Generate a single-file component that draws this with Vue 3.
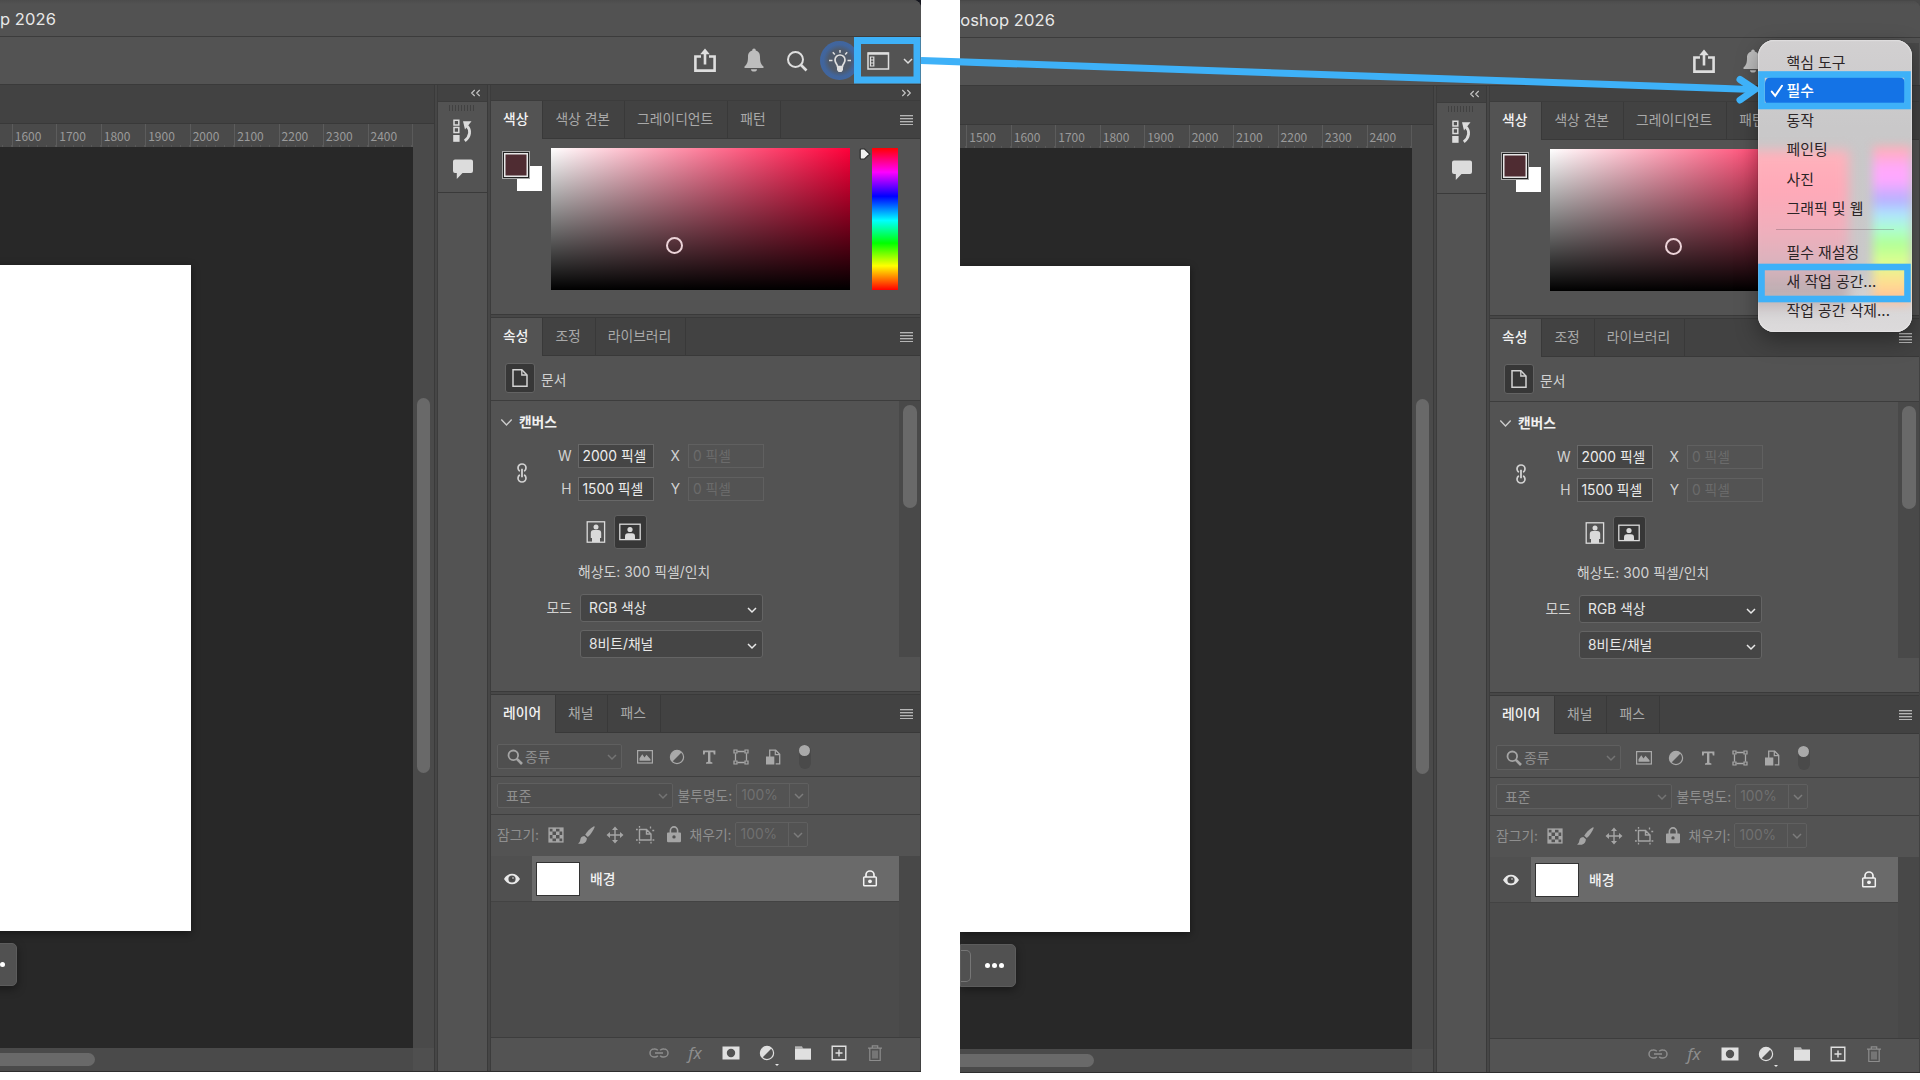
<template>
  <div class="board">
    <!-- icon sprite, one unit = one pixel at 24x24 -->
    <svg class="sprite" aria-hidden="true">
      <symbol id="share" viewBox="0 0 24 24">
        <path d="M8 8.5H2.4V22.6H21.6V8.5H16" fill="none" stroke="currentColor" stroke-width="2.6" />
        <path d="M12 16.5V4" fill="none" stroke="currentColor" stroke-width="2.6" />
        <path d="M7.2 6.2L12 0.6L16.8 6.2Z" fill="currentColor" />
      </symbol>
      <symbol id="bell" viewBox="0 0 24 24">
        <path d="M12 0.6a1.8 1.8 0 0 1 1.8 1.9C17 3.4 18 6 18 9c0 5.5 1.2 7.6 3.500 9.400V20H2.500V18.400C4.800 16.600 6 14.500 6 9c0-3 1-5.600 4.200-6.500A1.800 1.800 0 0 1 12 .6z" fill="currentColor" />
        <path d="M9 21.200h6a3 2.300 0 0 1-6 0z" fill="currentColor" />
      </symbol>
      <symbol id="search" viewBox="0 0 24 24">
        <circle cx="10.500" cy="10.500" r="7.500" fill="none" stroke="currentColor" stroke-width="2" />
        <path d="M16 16L21.500 21.500" stroke="currentColor" stroke-width="2.600" />
      </symbol>
      <symbol id="bulb" viewBox="0 0 24 24">
        <path d="M9.500 17.500C9.500 15 7 14.200 7 11a5 5 0 0 1 10 0c0 3.200-2.500 4-2.500 6.500z" fill="none" stroke="currentColor" stroke-width="1.700" />
        <path d="M9 17.500h6v3.500l-1.500 2h-3L9 21z" fill="currentColor" />
        <path d="M12 1v2.800M4.800 3.200l2 2.200M19.200 3.200l-2 2.200M1 11.500h3.500M19.500 11.500H23" stroke="currentColor" stroke-width="1.500" />
      </symbol>
      <symbol id="workspace" viewBox="0 0 24 24">
        <rect x="2" y="4" width="20.500" height="16" fill="none" stroke="currentColor" stroke-width="1.500" />
        <path d="M2 4.600H22.500" stroke="currentColor" stroke-width="2.400" />
        <path d="M4.500 8h3.300v9H4.500zM4.500 11h3.300M4.500 14h3.300" fill="none" stroke="currentColor" stroke-width="1.200" />
      </symbol>
      <symbol id="chevron" viewBox="0 0 12 12">
        <path d="M2 4l4 4 4-4" fill="none" stroke="currentColor" stroke-width="1.500" />
      </symbol>
      <symbol id="history" viewBox="0 0 24 24">
        <path d="M3 1.200h4.800v4.800H3zM3 8.600h4.800v4.800H3z" fill="none" stroke="currentColor" stroke-width="1.500" />
        <rect x="2.200" y="16" width="6.400" height="6.800" fill="currentColor" />
        <path d="M13.800 21.800C19.500 17.500 20 11 16 7" fill="none" stroke="currentColor" stroke-width="2.800" />
        <path d="M12 2.300h8.500L14 10.500z" fill="currentColor" />
      </symbol>
      <symbol id="comment" viewBox="0 0 24 24">
        <path d="M4 2.500h16a2 2 0 0 1 2 2v9.500a2 2 0 0 1-2 2H11.500L5.800 22V16H4a2 2 0 0 1-2-2V4.500a2 2 0 0 1 2-2z" fill="currentColor" />
      </symbol>
      <symbol id="doc" viewBox="0 0 24 24">
        <path d="M5 3.800h8.800l5.200 5.200v11.200H5z" fill="none" stroke="currentColor" stroke-width="1.500" />
        <path d="M13.800 3.800v5.200H19" fill="none" stroke="currentColor" stroke-width="1.300" />
      </symbol>
      <symbol id="chain" viewBox="0 0 24 24">
        <path d="M9.800 10.300A4.200 4.200 0 0 1 8 7a4 4 0 0 1 8 0 4.200 4.200 0 0 1-1.800 3.300M9.800 13.700A4.200 4.200 0 0 0 8 17a4 4 0 0 0 8 0 4.200 4.200 0 0 0-1.800-3.300" fill="none" stroke="currentColor" stroke-width="1.700" />
        <path d="M12 7.800v8.400" stroke="currentColor" stroke-width="1.800" />
      </symbol>
      <symbol id="portrait" viewBox="0 0 24 24">
        <rect x="3.200" y="1.800" width="17.400" height="20.400" fill="none" stroke="currentColor" stroke-width="1.300" />
        <circle cx="12" cy="7" r="2.500" fill="currentColor" />
        <path d="M6.800 13q0-3 3-3h4.400q3 0 3 3v5h-1.200v4H8v-4H6.800z" fill="currentColor" />
      </symbol>
      <symbol id="landscape" viewBox="0 0 24 24">
        <rect x="1.800" y="4.200" width="20.400" height="15.400" fill="none" stroke="currentColor" stroke-width="1.300" />
        <circle cx="12" cy="9.500" r="2.600" fill="currentColor" />
        <path d="M7 19.500v-3q0-3.200 3-3.200h4q3 0 3 3.200v3z" fill="currentColor" />
      </symbol>
      <symbol id="find" viewBox="0 0 24 24">
        <circle cx="10.300" cy="10.300" r="4.800" fill="none" stroke="currentColor" stroke-width="1.800" />
        <path d="M13.600 13.600l5.400 5.400" stroke="currentColor" stroke-width="2.700" />
      </symbol>
      <symbol id="image" viewBox="0 0 24 24">
        <rect x="4.600" y="5.600" width="14.800" height="12.400" fill="none" stroke="currentColor" stroke-width="1.200" />
        <path d="M6.500 15.800v-2.500l2.800-4 2.200 3.200 2-2.700 4 4.500v1.500z" fill="currentColor" />
      </symbol>
      <symbol id="adjust" viewBox="0 0 24 24">
        <circle cx="12" cy="12" r="6.600" fill="none" stroke="currentColor" stroke-width="1.200" />
        <path d="M16.700 7.300A6.650 6.650 0 0 0 7.300 16.700z" fill="currentColor" />
      </symbol>
      <symbol id="type" viewBox="0 0 24 24">
        <path d="M6 5.500h12.400v4h-1.600l-.5-2.200h-2.900v9.500l2 .6v1.300H9v-1.300l2-.6V7.300H8.100l-.5 2.200H6z" fill="currentColor" />
      </symbol>
      <symbol id="shape" viewBox="0 0 24 24">
        <path d="M8.500 6.500h7M8.500 17.500h7M6.500 8.500v7M17.500 8.500v7" stroke="currentColor" stroke-width="1.300" />
        <path d="M5 5h3v3H5zM16 5h3v3h-3zM5 16h3v3H5zM16 16h3v3h-3z" fill="none" stroke="currentColor" stroke-width="1.200" />
      </symbol>
      <symbol id="smart" viewBox="0 0 24 24">
        <path d="M8.700 12V5.200h6l4 4v9.600h-4" fill="none" stroke="currentColor" stroke-width="1.300" />
        <path d="M14.300 5.200v4.400h4.400" fill="none" stroke="currentColor" stroke-width="1.200" />
        <rect x="5" y="11.500" width="8.300" height="8" fill="currentColor" />
      </symbol>
      <symbol id="checker" viewBox="0 0 24 24">
        <rect x="5.100" y="5.100" width="13.800" height="13.800" fill="none" stroke="currentColor" stroke-width="1.400" />
        <path d="M8.500 5H12v3.500H8.500zM15.500 5H19v3.500h-3.500zM5 8.500h3.500V12H5zM12 8.500h3.500V12H12zM8.500 12H12v3.500H8.500zM15.500 12H19v3.500h-3.500zM5 15.500h3.500V19H5zM12 15.500h3.500V19H12z" fill="currentColor" />
      </symbol>
      <symbol id="brush" viewBox="0 0 24 24">
        <path d="M20 3.200c-4 2-7.200 5.500-8.800 8.600l2.600 2.200c3-2.600 5.600-6.500 7-10.300z" fill="currentColor" />
        <path d="M10.300 12.900c-3 .2-3.700 2-4 3.900-.2 1.800-.9 2.900-2.300 3.700 3.300.9 8.600.4 8.900-5.300z" fill="currentColor" />
      </symbol>
      <symbol id="move" viewBox="0 0 24 24">
        <path d="M12 5v14M5 12h14" stroke="currentColor" stroke-width="1.400" />
        <path d="M12 3.500l3 3.500H9zM12 20.500l3-3.500H9zM3.500 12L7 9v6zM20.500 12L17 9v6z" fill="currentColor" />
      </symbol>
      <symbol id="artboard" viewBox="0 0 24 24">
        <path d="M6.500 6.500v10.500h11.500V11l-4.500-4.500zM13.500 6.500v4.500H18" fill="none" stroke="currentColor" stroke-width="1.400" />
        <path d="M3 6.500h1.800M3 17h1.800M19.500 17h1.800M6.500 3v1.800M6.500 18.700v1.800M18 18.700v1.800M17.500 5.500V3.500M19.300 7.500h1.900" stroke="currentColor" stroke-width="1.300" />
      </symbol>
      <symbol id="lock" viewBox="0 0 24 24">
        <path d="M8.400 10V7.500a3.600 3.600 0 0 1 7.200 0V10" fill="none" stroke="currentColor" stroke-width="1.600" />
        <path fill-rule="evenodd" d="M6 9.500h12q1 0 1 1V18q0 1.200-1.200 1.200H6.200Q5 19.200 5 18v-7.500q0-1 1-1zM12 12.200a1.700 1.700 0 1 0 0 3.400 1.700 1.700 0 0 0 0-3.400z" fill="currentColor" />
      </symbol>
      <symbol id="lock-line" viewBox="0 0 24 24">
        <path d="M8 10V7.800a4 3.800 0 0 1 8 0V10" fill="none" stroke="currentColor" stroke-width="1.700" />
        <rect x="5.700" y="10" width="12.600" height="8.800" rx=".8" fill="none" stroke="currentColor" stroke-width="1.500" />
        <circle cx="12" cy="14.300" r="1.900" fill="currentColor" />
      </symbol>
      <symbol id="eye" viewBox="0 0 24 24">
        <path fill-rule="evenodd" d="M4 12c2-3.500 4.800-5.200 8-5.200s6 1.700 8 5.200c-2 3.500-4.800 5.200-8 5.200S6 15.500 4 12zm8-3.600a3.600 3.600 0 1 0 0 7.200 3.600 3.600 0 0 0 0-7.200z" fill="currentColor" />
        <circle cx="12" cy="12" r="1.700" fill="#444" />
        <circle cx="13" cy="11" r=".8" fill="currentColor" />
      </symbol>
      <symbol id="link" viewBox="0 0 24 24">
        <path d="M10.800 9.200A4 4 0 0 0 7 8a4 4 0 0 0 0 8 4 4 0 0 0 3.800-1.200M13.200 9.200A4 4 0 0 1 17 8a4 4 0 0 1 0 8 4 4 0 0 1-3.800-1.200" fill="none" stroke="currentColor" stroke-width="1.500" />
        <path d="M8 12h8" stroke="currentColor" stroke-width="1.600" />
      </symbol>
      <symbol id="mask" viewBox="0 0 24 24">
        <path fill-rule="evenodd" d="M3.500 5.500h17v13h-17zM12 7.800a4.200 4.200 0 1 0 0 8.400 4.200 4.200 0 0 0 0-8.400z" fill="currentColor" />
      </symbol>
      <symbol id="folder" viewBox="0 0 24 24">
        <path d="M4 5.500h7l1.200 2H20v11.200H4z" fill="currentColor" />
        <path d="M4 7h8" stroke="#535353" stroke-width=".6" />
      </symbol>
      <symbol id="plus" viewBox="0 0 24 24">
        <path d="M5.200 5.200h13.600v13.600H5.200z" fill="none" stroke="currentColor" stroke-width="1.400" />
        <path d="M12 8.500v7M8.500 12h7" stroke="currentColor" stroke-width="1.400" />
      </symbol>
      <symbol id="trash" viewBox="0 0 24 24">
        <path d="M5 7.200h14M9.300 7V4.800h5.400V7M6.800 7.500v12h10.400v-12M10 9.500v8M12 9.500v8M14 9.500v8" fill="none" stroke="currentColor" stroke-width="1.200" />
      </symbol>
    </svg>

    <div v-for="shot in shots" :key="shot.id" class="shot" :class="shot.id">
      <div class="window">
        <header class="titlebar"><span>Adobe Photoshop 2026</span></header>

        <div class="options">
          <svg class="ic share"><use href="#share" /></svg>
          <svg class="ic bell"><use href="#bell" /></svg>
          <svg class="ic find-all"><use href="#search" /></svg>
          <span class="tip"><svg class="ic"><use href="#bulb" /></svg></span>
          <span class="workspace">
            <svg class="ic"><use href="#workspace" /></svg>
            <svg class="chev"><use href="#chevron" /></svg>
          </span>
        </div>

        <div class="body">
          <section class="document">
            <div class="doc-tabs"></div>
            <div class="ruler">
              <span v-for="n in ruler" :key="n" class="tick">{{ n }}</span>
            </div>
            <div class="stage">
              <div class="canvas">
                <div class="page"></div>
                <div class="context-bar">
                  <span class="context-btn"></span>
                  <i></i><i></i><i></i>
                </div>
              </div>
              <div class="v-scroll"><div class="v-thumb"></div></div>
            </div>
            <div class="h-scroll"><div class="h-thumb"></div></div>
          </section>

          <div class="splitter"></div>

          <aside class="dock">
            <div class="dock-head">
              <svg width="11" height="8" viewBox="0 0 11 8"><path d="M4.700 1L1.700 4l3 3M9.700 1l-3 3 3 3" fill="none" stroke="#c4c4c4" stroke-width="1.200" /></svg>
            </div>
            <div class="dock-icons">
              <div class="grip"></div>
              <svg class="ic"><use href="#history" /></svg>
              <svg class="ic"><use href="#comment" /></svg>
            </div>
          </aside>

          <div class="splitter"></div>

          <aside class="panels">
            <div class="panels-head">
              <svg width="11" height="8" viewBox="0 0 11 8"><path d="M1.300 1l3 3-3 3M6.300 1l3 3-3 3" fill="none" stroke="#c4c4c4" stroke-width="1.200" /></svg>
            </div>

            <div class="tabs">
              <span v-for="(t, i) in colorTabs" :key="t" class="tab" :class="{ active: i === 0 }">{{ t }}</span>
              <b class="menu-icon"></b>
            </div>
            <div class="color-body">
              <div class="swatches">
                <div class="bg-swatch"></div>
                <div class="fg-swatch"></div>
              </div>
              <div class="field"><div class="picker"></div></div>
              <svg class="pointer" width="14" height="14" viewBox="0 0 14 14"><path d="M3.500 1.800h2.800L11.700 7l-5.400 5.200H3.500q-1.300 0-1.300-1.300V3.100q0-1.300 1.300-1.300z" fill="#f0f0f0" stroke="#2c2c2c" stroke-width="1.200" /></svg>
              <div class="hue"></div>
            </div>

            <div class="gap"></div>

            <div class="tabs">
              <span v-for="(t, i) in propTabs" :key="t" class="tab" :class="{ active: i === 0 }">{{ t }}</span>
              <b class="menu-icon"></b>
            </div>
            <div class="doc-row">
              <span class="doc-btn"><svg class="ic"><use href="#doc" /></svg></span>
              <span class="doc-label">문서</span>
            </div>
            <div class="props">
              <div class="props-main">
                <div class="group">
                  <svg width="13" height="9" viewBox="0 0 13 9"><path d="M1.300 1.500l5.200 5.500 5.200-5.500" fill="none" stroke="#ccc" stroke-width="1.400" /></svg>
                  <b>캔버스</b>
                </div>
                <div class="size">
                  <svg class="ic chain"><use href="#chain" /></svg>
                  <div class="size-grid">
                    <label>W</label><span class="field-box">2000 픽셀</span>
                    <label>X</label><span class="field-box off">0 픽셀</span>
                    <label>H</label><span class="field-box">1500 픽셀</span>
                    <label>Y</label><span class="field-box off">0 픽셀</span>
                  </div>
                </div>
                <div class="orient">
                  <span class="orient-btn"><svg class="ic"><use href="#portrait" /></svg></span>
                  <span class="orient-btn on"><svg class="ic"><use href="#landscape" /></svg></span>
                </div>
                <div class="resolution">해상도: 300 픽셀/인치</div>
                <div class="mode">
                  <label>모드</label>
                  <span class="select">RGB 색상<svg class="chev"><use href="#chevron" /></svg></span>
                </div>
                <div class="mode">
                  <label></label>
                  <span class="select">8비트/채널<svg class="chev"><use href="#chevron" /></svg></span>
                </div>
              </div>
              <div class="props-scroll"><div class="props-thumb"></div></div>
            </div>

            <div class="gap"></div>

            <div class="tabs">
              <span v-for="(t, i) in layerTabs" :key="t" class="tab" :class="{ active: i === 0 }">{{ t }}</span>
              <b class="menu-icon"></b>
            </div>
            <div class="filter-row">
              <span class="dim-box kind"><svg class="ic"><use href="#find" /></svg>종류<svg class="chev"><use href="#chevron" /></svg></span>
              <div class="filters">
                <svg v-for="f in filters" :key="f" class="ic"><use :href="'#' + f" /></svg>
              </div>
              <span class="toggle"><i></i></span>
            </div>
            <div class="blend-row">
              <span class="dim-box blend">표준<svg class="chev"><use href="#chevron" /></svg></span>
              <label>불투명도:</label>
              <span class="percent"><em>100%</em><svg class="chev"><use href="#chevron" /></svg></span>
            </div>
            <div class="lock-row">
              <label class="lock-label">잠그기:</label>
              <div class="locks">
                <svg v-for="l in locks" :key="l" class="ic"><use :href="'#' + l" /></svg>
              </div>
              <label>채우기:</label>
              <span class="percent"><em>100%</em><svg class="chev"><use href="#chevron" /></svg></span>
            </div>
            <div class="layers">
              <div class="layer-list">
                <div class="layer">
                  <span class="eye"><svg class="ic"><use href="#eye" /></svg></span>
                  <div class="layer-main">
                    <span class="thumb"></span>
                    <span class="layer-name">배경</span>
                    <svg class="ic"><use href="#lock-line" /></svg>
                  </div>
                </div>
              </div>
              <div class="layer-scroll"></div>
            </div>
            <footer class="layer-tools">
              <svg class="ic off"><use href="#link" /></svg>
              <span class="fx">fx</span>
              <svg class="ic"><use href="#mask" /></svg>
              <span class="adj"><svg class="ic"><use href="#adjust" /></svg><i></i></span>
              <svg class="ic"><use href="#folder" /></svg>
              <svg class="ic"><use href="#plus" /></svg>
              <svg class="ic off"><use href="#trash" /></svg>
            </footer>
          </aside>
        </div>
      </div>

      <div v-if="shot.menu" class="popup">
        <div class="glass">
          <div class="glass-pink"></div>
          <div class="glass-hue"></div>
        </div>
        <ul>
          <li v-for="m in workspaces" :key="m" :class="{ checked: m === current }">
            <svg v-if="m === current" width="14" height="14" viewBox="0 0 14 14"><path d="M1.800 7.600l3.400 4.200L12 1.800" fill="none" stroke="#fff" stroke-width="2" stroke-linecap="round" /></svg>
            {{ m }}
          </li>
          <li class="rule"></li>
          <li v-for="m in actions" :key="m">{{ m }}</li>
        </ul>
      </div>
    </div>

    <!-- callouts -->
    <svg class="callouts" width="1920" height="1080" viewBox="0 0 1920 1080">
      <g fill="none" stroke="#3eb1f8">
        <rect x="857.500" y="40.500" width="59.500" height="39.500" stroke-width="7" />
        <rect x="1761.500" y="74.500" width="146" height="31.500" stroke-width="6.600" />
        <rect x="1761.500" y="267" width="146" height="32" stroke-width="6.600" />
        <path d="M921 60.500L1754 89.500" stroke-width="7" />
        <path d="M1740 79.500L1755 89.500L1740 100" stroke-width="7" stroke-linecap="round" stroke-linejoin="round" />
      </g>
    </svg>
  </div>
</template>

<script setup>
const shots = [
  { id: 'before', menu: false },
  { id: 'after', menu: true }
]

const ruler = [1500, 1600, 1700, 1800, 1900, 2000, 2100, 2200, 2300, 2400]

const colorTabs = ['색상', '색상 견본', '그레이디언트', '패턴']
const propTabs = ['속성', '조정', '라이브러리']
const layerTabs = ['레이어', '채널', '패스']

const filters = ['image', 'adjust', 'type', 'shape', 'smart']
const locks = ['checker', 'brush', 'move', 'artboard', 'lock']

const current = '필수'
const workspaces = ['핵심 도구', '필수', '동작', '페인팅', '사진', '그래픽 및 웹']
const actions = ['필수 재설정', '새 작업 공간...', '작업 공간 삭제...']
</script>

<style>
body {
  margin: 0;
  background: #fff;
}
</style>

<style scoped>
.board {
  position: relative;
  display: flex;
  justify-content: space-between;
  width: 1920px;
  height: 1080px;
  overflow: hidden;
  background: #fff;
  color: #d2d2d2;
  font-family: "Inter", "Noto Sans CJK KR", sans-serif;
  font-size: 13.8px;
  line-height: 20px;
}

.board * {
  box-sizing: border-box;
}

.sprite {
  position: absolute;
  width: 0;
  height: 0;
}

.ic {
  width: 24px;
  height: 24px;
  flex: none;
}

.chev {
  width: 12px;
  height: 12px;
  flex: none;
}

.shot {
  position: relative;
  display: flex;
  justify-content: flex-end;
  width: 921px;
  height: 1072px;
  overflow: hidden;
  background: #15161e;
}

.shot.after {
  width: 960px;
  height: 1073px;
  padding-top: 1px;
  background: #484848;
}

.window {
  flex: none;
  display: flex;
  flex-direction: column;
  width: 960px;
  height: 1072px;
  background: #535353;
  border-top-right-radius: 8px;
  border-bottom: 1px solid #2e2e2e;
  overflow: hidden;
}

.titlebar {
  height: 37px;
  border-bottom: 1px solid #3c3c3c;
  background: linear-gradient(#4c4c4c, #525252 4px);
  display: flex;
  align-items: center;
}

.titlebar span {
  width: 95px;
  display: flex;
  justify-content: flex-end;
  white-space: nowrap;
  font-size: 16.500px;
  letter-spacing: 0.100px;
  color: #e8e8e8;
  padding-top: 1px;
}

.options {
  height: 48px;
  border-bottom: 1px solid #3a3a3a;
  padding-right: 1px;
  display: flex;
  align-items: center;
  justify-content: flex-end;
  color: #dedede;
}

.share {
  margin: 0 24.500px 2px 0;
}

.bell {
  color: #bdbdbd;
  margin: 0 19.500px 2px 0;
}

.find-all {
  margin-right: 11px;
}

.tip {
  display: flex;
  align-items: center;
  justify-content: center;
  width: 39px;
  height: 39px;
  border-radius: 50%;
  background: radial-gradient(circle, #525a66 0, #4e5a6c 40%, #41659c 58%, #3f68a8 100%);
  margin-right: 7px;
}

.workspace {
  display: flex;
  align-items: center;
  justify-content: space-between;
  width: 54px;
  padding-right: 6px;
}

.after .workspace {
  align-self: stretch;
  margin-top: 5px;
  background: #484848;
}

.body {
  flex: 1;
  display: flex;
  min-height: 0;
}

/* document area */
.document {
  flex: none;
  width: 473px;
  display: flex;
  flex-direction: column;
  background: #4a4a4a;
}

.doc-tabs {
  height: 39px;
  background: #424242;
  border-bottom: 1px solid #393939;
}

.ruler {
  display: flex;
  justify-content: flex-end;
  width: 452px;
  height: 23px;
  border-right: 1px solid #5a5a5a;
  background: repeating-linear-gradient(to left, #585858 0 1px, transparent 1px 8.900px) right bottom / 100% 2px no-repeat;
}

.tick {
  width: 44.480px;
  flex: none;
  border-left: 1px solid #5c5c5c;
  padding: 2px 0 0 2px;
  font-family: "Noto Sans CJK KR", sans-serif;
  font-size: 12px;
  color: #9a9a9a;
}

.stage {
  flex: 1;
  display: flex;
}

.canvas {
  width: 452px;
  background: #282828;
  padding-top: 118px;
  overflow: hidden;
}

.page {
  width: 230px;
  height: 666px;
  background: #fff;
  box-shadow: 0 2px 8px rgba(0, 0, 0, 0.45);
}

.context-bar {
  display: flex;
  align-items: center;
  width: 56px;
  height: 43px;
  margin-top: 12px;
  border-radius: 0 5px 5px 0;
  background: #515151;
  border: 1px solid #5c5c5c;
  box-shadow: 0 3px 10px rgba(0, 0, 0, 0.4);
}

.context-btn {
  width: 10px;
  height: 32px;
  border: 1px solid #767676;
  border-left: none;
  border-radius: 0 5px 5px 0;
  margin-right: 14px;
}

.context-bar i {
  width: 5px;
  height: 5px;
  border-radius: 50%;
  background: #fff;
  margin-right: 2.200px;
}

.v-scroll {
  flex: 1;
  padding: 251px 0 0 4px;
}

.v-thumb {
  width: 13px;
  height: 375px;
  border-radius: 7px;
  background: #696969;
}

.h-scroll {
  height: 23px;
  background: linear-gradient(to right, #4a4a4a 452px, #4f4f4f 452px);
  padding-top: 5px;
}

.h-thumb {
  width: 134px;
  height: 13px;
  border-radius: 0 7px 7px 0;
  background: #696969;
}

.splitter {
  flex: none;
  width: 4px;
  background: #464646;
  border-left: 1px solid #3a3a3a;
  border-right: 1px solid #3c3c3c;
}

/* collapsed dock */
.dock {
  flex: none;
  width: 49px;
  color: #dcdcdc;
}

.dock-head {
  height: 17px;
  background: #424242;
  border-bottom: 1px solid #3c3c3c;
  display: flex;
  align-items: center;
  justify-content: flex-end;
  padding-right: 6.500px;
}

.dock-icons {
  height: 91px;
  border-bottom: 1px solid #3a3a3a;
  display: flex;
  flex-direction: column;
  align-items: center;
}

.grip {
  width: 27px;
  height: 6px;
  margin: 3px 0 8px;
  background: repeating-linear-gradient(to right, #414141 0 1px, #535353 1px 3px);
}

.dock-icons .ic + .ic {
  margin-top: 14px;
}

/* panels */
.panels {
  flex: none;
  width: 430px;
  border-right: 1px solid #424242;
  display: flex;
  flex-direction: column;
}

.panels-head {
  height: 16px;
  background: #424242;
  border-bottom: 1px solid #3c3c3c;
  display: flex;
  align-items: center;
  justify-content: flex-end;
  padding-right: 8px;
}

.tabs {
  display: flex;
  height: 38px;
  flex: none;
  background: linear-gradient(#424242 37px, #393939 37px);
}

.tab {
  padding: 8px 14px 0 12px;
  height: 37px;
  border-right: 1px solid #393939;
  color: #a9a9a9;
  white-space: nowrap;
}

.tab.active {
  height: 38px;
  background: #535353;
  color: #f2f2f2;
  font-weight: 500;
}

.menu-icon {
  width: 13px;
  height: 10px;
  margin: 14px 7px 0 auto;
  background: repeating-linear-gradient(#b5b5b5 0 1px, #6a6a6a 1px 2px, transparent 2px 3px);
}

.color-body {
  display: flex;
  height: 175px;
  padding: 9px 22px 0 11px;
}

.swatches {
  display: grid;
  width: 49px;
  height: 42px;
  margin-top: 3px;
}

.fg-swatch,
.bg-swatch {
  grid-area: 1 / 1;
}

.fg-swatch {
  width: 28px;
  height: 28px;
  background: #4f2c32;
  border: 1px solid #a8a8a8;
  box-shadow: inset 0 0 0 1px #222, inset 0 0 0 2.500px #e6e6e6;
}

.bg-swatch {
  width: 25px;
  height: 25px;
  margin: 15px 0 0 15px;
  background: #fff;
}

.field {
  width: 299px;
  height: 142px;
  display: flex;
  background: linear-gradient(to top, #000, rgba(0, 0, 0, 0)), linear-gradient(to right, #fff, #ff003a);
}

.picker {
  width: 17px;
  height: 17px;
  margin: 89px 0 0 115px;
  border: 2px solid #ecd3d8;
  border-radius: 50%;
}

.pointer {
  margin: -1px 0 0 8px;
}

.hue {
  width: 26px;
  height: 142px;
  background: linear-gradient(#f00, #f0f 17%, #00f 34%, #0ff 51%, #0f0 67%, #ff0 83%, #f00);
}

.gap {
  height: 4px;
  flex: none;
  background: #474747;
  border-top: 1px solid #3a3a3a;
  border-bottom: 1px solid #3a3a3a;
}

.doc-row {
  height: 45px;
  border-bottom: 1px solid #3d3d3d;
  display: flex;
  align-items: center;
  gap: 6px;
  padding-left: 14px;
}

.doc-label {
  padding-top: 3px;
}

.doc-btn {
  display: flex;
  padding: 2px;
  width: 30px;
  height: 30px;
  background: #373737;
  border: 1px solid #636363;
  border-radius: 3px;
}

.props {
  display: flex;
  height: 290px;
}

.props-main {
  flex: 1;
}

.group {
  display: flex;
  align-items: center;
  gap: 6px;
  padding: 11px 0 0 9px;
  color: #f0f0f0;
  letter-spacing: -0.100px;
}

.size {
  display: flex;
  align-items: center;
  margin-top: 12px;
  padding-left: 19px;
}

.size-grid {
  display: grid;
  grid-template-columns: 43.500px 76px 34.500px 76px;
  grid-template-rows: 24px 24px;
  row-gap: 9px;
}

.size-grid label {
  text-align: right;
  line-height: 24px;
  padding-right: 6px;
}

.size-grid label:nth-of-type(even) {
  padding-right: 8px;
}

.field-box {
  border: 1px solid #686868;
  background: #454545;
  color: #ededed;
  padding-left: 4px;
  line-height: 22px;
  white-space: nowrap;
}

.field-box.off {
  background: none;
  border-color: #606060;
  color: #6b6b6b;
}

.orient {
  display: flex;
  gap: 1px;
  padding: 14px 0 0 88.500px;
  color: #dadada;
}

.orient-btn {
  display: flex;
  padding: 5px 4px 3px;
  width: 33px;
  height: 34px;
}

.orient-btn.on {
  background: #373737;
  border: 1px solid #606060;
  border-radius: 3px;
  padding: 4px 3px;
}

.resolution {
  margin: 13px 0 12px 87px;
  letter-spacing: 0.060px;
}

.mode {
  display: flex;
  align-items: center;
  margin-bottom: 8px;
}

.mode label {
  width: 81px;
  text-align: right;
  margin-right: 8px;
}

.select {
  display: flex;
  align-items: center;
  justify-content: space-between;
  width: 183px;
  height: 28px;
  padding: 0 4px 1px 8px;
  border: 1px solid #646464;
  border-radius: 3px;
  background: #454545;
  color: #e8e8e8;
}

.select .chev {
  position: relative;
  top: 2px;
}

.props-scroll {
  width: 21px;
  height: 256px;
  background: #494949;
  padding: 4px 0 0 4px;
}

.props-thumb {
  width: 14px;
  height: 103px;
  border-radius: 7px;
  background: #696969;
}

/* layers */
.filter-row,
.blend-row,
.lock-row {
  display: flex;
  align-items: center;
  flex: none;
  color: #8f8f8f;
}

.filter-row {
  height: 44px;
  border-bottom: 1px solid #3f3f3f;
  padding: 4px 0 0 6px;
}

.blend-row {
  height: 38px;
  border-bottom: 1px solid #3f3f3f;
  padding-left: 6px;
}

.lock-row {
  height: 41px;
  padding: 0 0 2px 6px;
}

.dim-box {
  display: flex;
  align-items: center;
  height: 25px;
  border: 1px solid #5f5f5f;
  border-radius: 2px;
  background: #4f4f4f;
}

.dim-box .chev {
  margin-left: auto;
  margin-right: 3px;
  color: #747474;
}

.kind {
  width: 125px;
  padding-left: 4px;
}

.kind .ic {
  margin: 0 -2px 0 1px;
  color: #a5a5a5;
}

.blend {
  width: 176px;
  padding-left: 8px;
  margin-right: 4.500px;
}

.filters {
  display: flex;
  gap: 8px;
  margin-left: 11px;
  color: #a9a9a9;
}

.toggle {
  width: 12px;
  height: 24px;
  margin-left: 14px;
  border-radius: 6px;
  background: #4a4a4a;
}

.toggle i {
  display: block;
  width: 11px;
  height: 11px;
  border-radius: 50%;
  background: #a9a9a9;
}

.percent {
  display: flex;
  align-items: center;
  height: 25px;
  width: 73px;
  margin-left: 3.500px;
  border: 1px solid #606060;
  border-radius: 2px;
  color: #707070;
}

.percent em {
  width: 53px;
  padding-left: 4.500px;
  line-height: 23px;
  font-style: normal;
  border-right: 1px solid #606060;
}

.percent .chev {
  margin-left: 3px;
  color: #7c7c7c;
}

.lock-label {
  width: 47px;
  white-space: nowrap;
}

.locks {
  display: flex;
  gap: 5.500px;
  color: #a5a5a5;
  margin-right: 3.500px;
}

.layers {
  flex: 1;
  display: flex;
  background: #4b4b4b;
}

.layer-list {
  flex: 1;
}

.layer {
  display: flex;
  height: 46px;
  border-bottom: 1px solid #434343;
}

.eye {
  width: 41px;
  background: #505050;
  display: flex;
  align-items: center;
  justify-content: center;
  color: #e8e8e8;
}

.layer-main {
  flex: 1;
  display: flex;
  align-items: center;
  background: #6a6a6a;
  padding: 1px 17px 0 4px;
  color: #f2f2f2;
  font-weight: 500;
}

.thumb {
  width: 44px;
  height: 34px;
  border: 1.500px solid #333;
  background: #fff;
}

.layer-name {
  flex: 1;
  padding-left: 10px;
  margin-top: -1px;
}

.layer-scroll {
  width: 21px;
  background: #484848;
}

.layer-tools {
  height: 34px;
  border-top: 1px solid #3d3d3d;
  display: flex;
  align-items: center;
  justify-content: flex-end;
  gap: 12px;
  padding: 0 33px 3px 0;
  color: #e0e0e0;
}

.layer-tools .off {
  color: #8d8d8d;
}

.fx {
  width: 24px;
  text-align: center;
  color: #8d8d8d;
  font-family: "Noto Sans", sans-serif;
  font-style: italic;
  font-size: 17px;
}

.adj {
  position: relative;
  display: flex;
}

.adj i {
  position: absolute;
  right: 0;
  bottom: -1px;
  border: 2.500px solid transparent;
  border-top-color: #e8e8e8;
  border-bottom: 0;
}

/* workspace menu */
.popup {
  position: absolute;
  left: 797.500px;
  top: 40px;
  width: 154.500px;
  height: 292px;
  border-radius: 16px;
  background: #cdcccd;
  box-shadow: 0 8px 22px rgba(0, 0, 0, 0.35), 0 0 1px rgba(0, 0, 0, 0.6);
  color: #2b2426;
  font-size: 14.900px;
}

.glass {
  position: absolute;
  inset: 0;
  border-radius: 16px;
  overflow: hidden;
  background: linear-gradient(#d2d0d1 0, #c9c8c9 30%, #cac9ca 80%, #d9d7d8 93%, #dcdadb 100%);
  box-shadow: inset 0 0 2px #fff;
}

.glass-pink {
  position: absolute;
  left: -10px;
  top: 110px;
  width: 101px;
  height: 165px;
  filter: blur(6px);
  background: linear-gradient(to bottom, #ffb3bc 0, #ffa9b8 40px, #f0afbc 80px, #d9b3bd 115px, #b9adb0 145px, rgba(200, 195, 198, 0) 165px);
}

.glass-hue {
  position: absolute;
  left: 115px;
  top: 106px;
  width: 38px;
  height: 158px;
  filter: blur(5px);
  background: linear-gradient(#ffb0b0 0, #ffa8fb 22px, #ffa8ff 34px, #b7b0ff 54px, #afe4ff 68px, #adffce 84px, #b2ff95 98px, #dcff90 116px, #ffdf90 136px, #ffb99c 158px);
}

.popup ul {
  position: relative;
  list-style: none;
  margin: 0;
  padding: 7.500px 7px 0;
}

.popup li {
  height: 29.300px;
  padding-left: 22px;
  line-height: 30px;
  white-space: nowrap;
}

.popup li.checked {
  display: flex;
  align-items: center;
  gap: 3px;
  padding-left: 5px;
  border-radius: 6px;
  background: #1473e6;
  color: #fff;
  font-weight: 500;
}

.popup li.rule {
  height: 14.500px;
  margin: 0 11px;
  padding: 0;
  background: linear-gradient(rgba(90, 70, 80, 0.3), rgba(90, 70, 80, 0.3)) 0 6px / 100% 1px no-repeat;
}

.callouts {
  position: absolute;
  left: 0;
  top: 0;
}
</style>
